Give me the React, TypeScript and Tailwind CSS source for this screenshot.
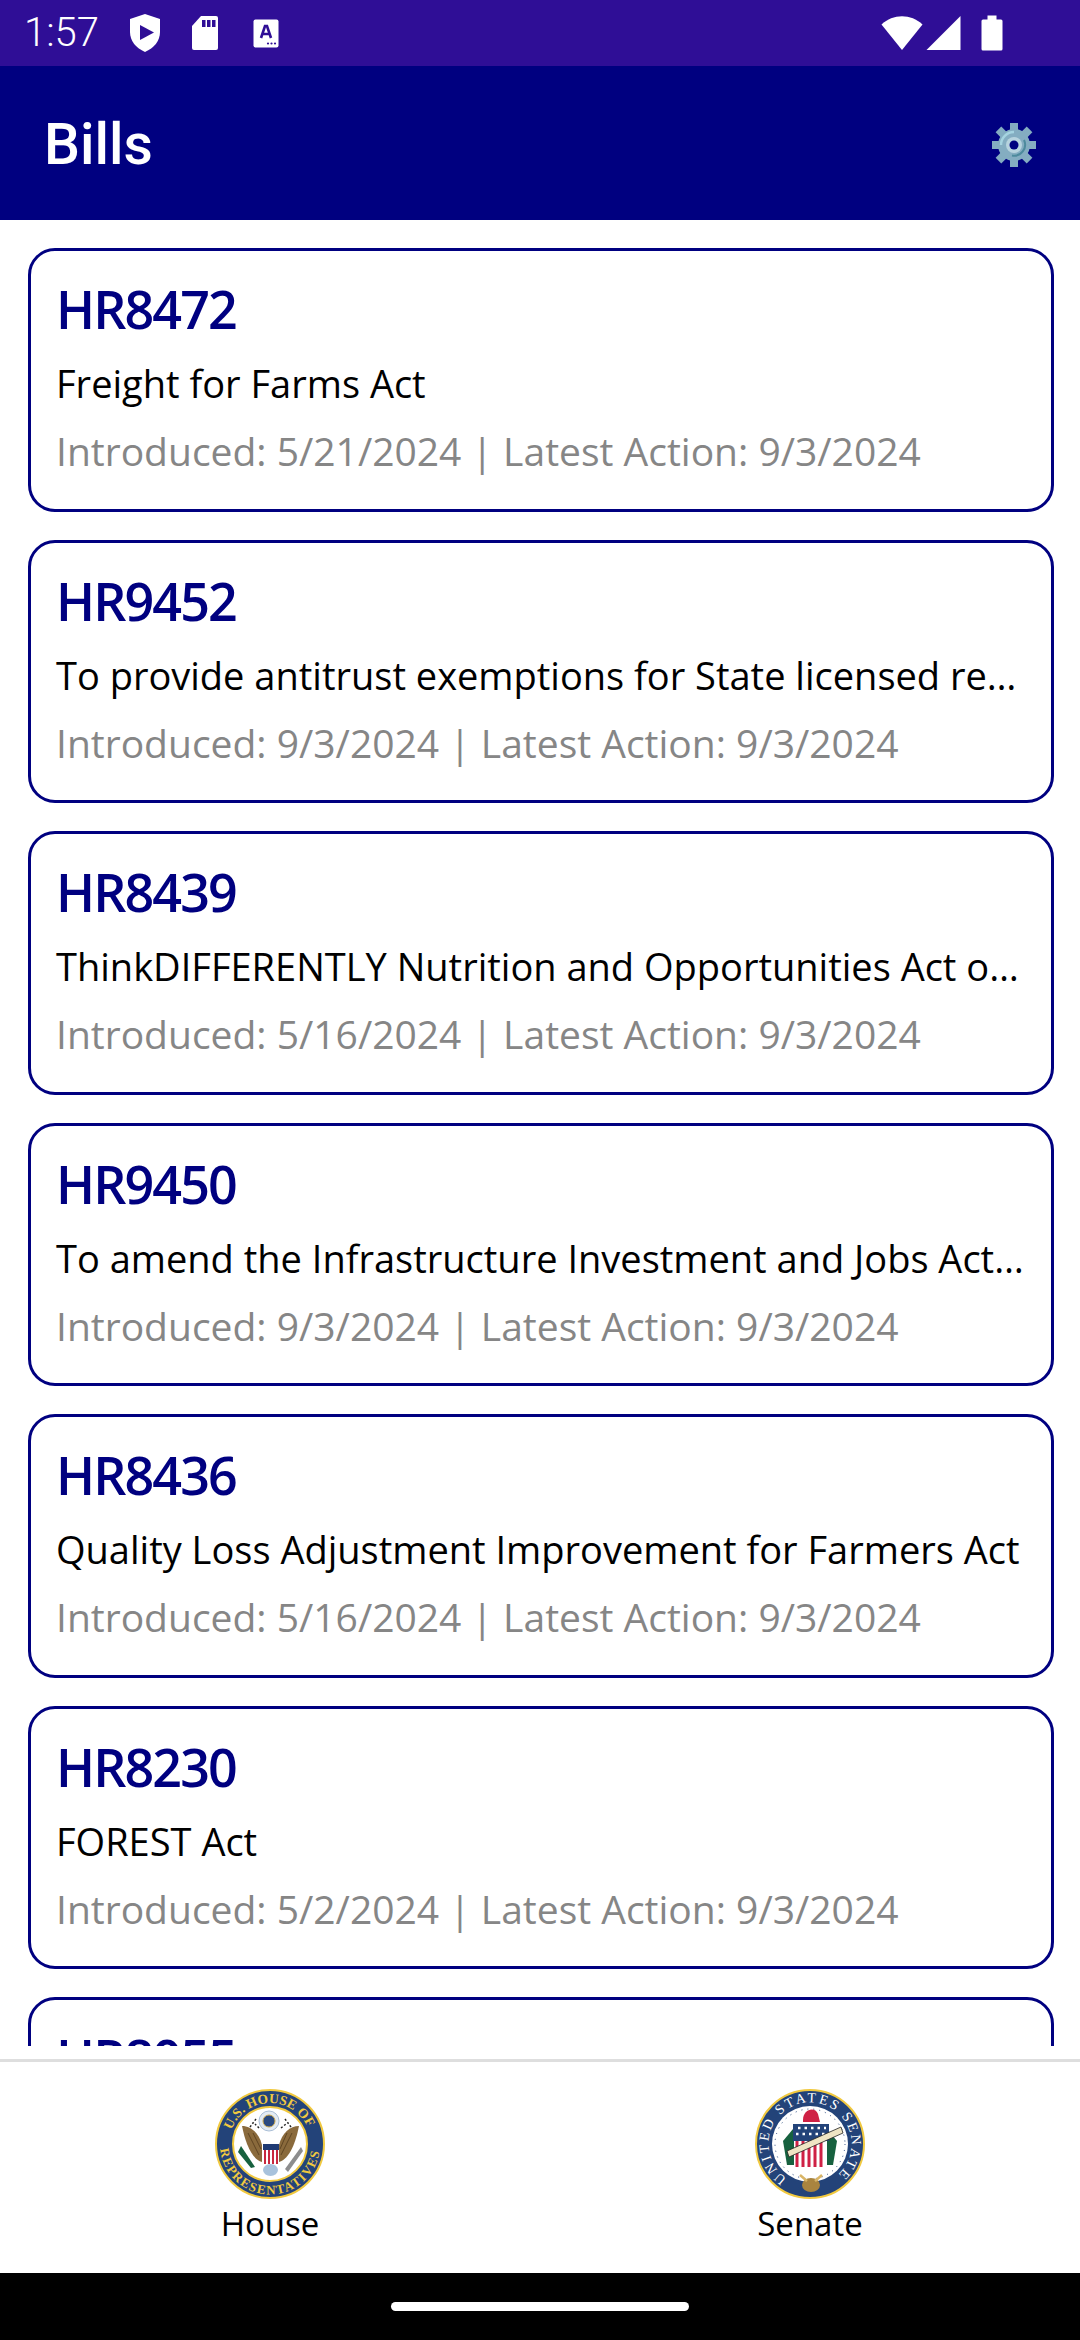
const bills = [
  { id: "HR8472", title: "Freight for Farms Act", intro: "5/21/2024" },
  { id: "HR9452", title: "To provide antitrust exemptions for State licensed re…", intro: "9/3/2024" },
  { id: "HR8439", title: "ThinkDIFFERENTLY Nutrition and Opportunities Act o…", intro: "5/16/2024" },
  { id: "HR9450", title: "To amend the Infrastructure Investment and Jobs Act…", intro: "9/3/2024" },
  { id: "HR8436", title: "Quality Loss Adjustment Improvement for Farmers Act", intro: "5/16/2024" },
  { id: "HR8230", title: "FOREST Act", intro: "5/2/2024" },
  { id: "HR8055", title: "", intro: "" },
]

const StatusIcons = () => (
  <div className="flex items-center">
    <svg width="32" height="38" viewBox="0 0 32 38" className="ml-[30px]">
      <path d="M16 0 L31 5 V18 C31 27 25 34 16 38 C7 34 1 27 1 18 V5 Z" fill="#fff" />
      <path d="M11 11 L25 18.5 L11 26 Z" fill="#2f0e96" />
    </svg>
    <svg width="28" height="34" viewBox="0 0 28 34" className="ml-[30px]">
      <path d="M10 0 H25 a2 2 0 0 1 2 2 V32 a2 2 0 0 1 -2 2 H3 a2 2 0 0 1 -2 -2 V10 Z" fill="#fff" />
      <rect x="11" y="4" width="3.5" height="7" fill="#2f0e96" />
      <rect x="16" y="4" width="3.5" height="7" fill="#2f0e96" />
      <rect x="21" y="4" width="3.5" height="7" fill="#2f0e96" />
    </svg>
    <svg width="26" height="29" viewBox="0 0 26 29" className="ml-[34px]">
      <rect x="0.5" y="0.5" width="25" height="28" rx="2" fill="#fff" />
      <path d="M8 19 L12 7 H14 L18 19 M9.5 15 H16.5" stroke="#2f0e96" strokeWidth="2.6" fill="none" />
      <circle cx="15" cy="24.5" r="1.1" fill="#2f0e96" />
      <circle cx="18.5" cy="24.5" r="1.1" fill="#2f0e96" />
      <circle cx="22" cy="24.5" r="1.1" fill="#2f0e96" />
    </svg>
  </div>
)

const SystemIcons = () => (
  <div className="flex items-center">
    <svg width="42" height="36" viewBox="0 0 42 36">
      <path d="M0.5 9.5 C12 -1.5 30 -1.5 41.5 9.5 L21 35 Z" fill="#fff" />
    </svg>
    <svg width="36" height="36" viewBox="0 0 36 36" className="ml-[3px]">
      <path d="M34.5 1 V35 H0.5 Z" fill="#fff" />
    </svg>
    <svg width="22" height="36" viewBox="0 0 22 36" className="ml-[19px]">
      <path d="M6.5 0.5 H15.5 V4.5 H20 a1.5 1.5 0 0 1 1.5 1.5 V34 a1.5 1.5 0 0 1 -1.5 1.5 H2 a1.5 1.5 0 0 1 -1.5 -1.5 V6 a1.5 1.5 0 0 1 1.5 -1.5 H6.5 Z" fill="#fff" />
    </svg>
  </div>
)

const Gear = () => (
  <svg width="44" height="44" viewBox="0 0 44 44">
    <g fill="#84adc1">
      <rect x="18" y="0" width="8" height="44" />
      <rect x="0" y="18" width="44" height="8" />
      <rect x="18" y="0" width="8" height="44" transform="rotate(45 22 22)" />
      <rect x="18" y="0" width="8" height="44" transform="rotate(-45 22 22)" />
      <circle cx="22" cy="22" r="16" />
    </g>
    <path d="M9 22 A13 13 0 0 1 22 9" stroke="#a5d3e0" strokeWidth="2.5" fill="none" />
    <path d="M32 17 A11 11 0 0 1 20 32.5" stroke="#4d8a9d" strokeWidth="2" fill="none" />
    <circle cx="22" cy="22" r="8" fill="#b7d3de" />
    <circle cx="22" cy="22" r="4.5" fill="#000080" />
  </svg>
)

const HouseSeal = () => (
  <svg width="110" height="110" viewBox="0 0 110 110">
    <defs>
      <path id="houseTop" d="M16.5 41 A41 41 0 0 1 93.5 41" />
      <path id="houseBottom" d="M5.2 60 A50 50 0 0 0 104.8 60" />
    </defs>
    <circle cx="55" cy="55" r="54" fill="#234379" stroke="#f1c93f" strokeWidth="2" />
    <circle cx="55" cy="55" r="37" fill="#fff" stroke="#f1c93f" strokeWidth="2" />
    <text fontSize="13.5" fontFamily="Liberation Serif, serif" fontWeight="700" fill="#f1c93f">
      <textPath href="#houseTop" textLength="97">U.S. HOUSE OF</textPath>
    </text>
    <text fontSize="13" fontFamily="Liberation Serif, serif" fontWeight="700" fill="#f1c93f">
      <textPath href="#houseBottom" textLength="145">REPRESENTATIVES</textPath>
    </text>
    <circle cx="54" cy="32" r="10" fill="#e4ebf3" stroke="#a9bed6" />
    <circle cx="54" cy="32" r="6" fill="#2b4a80" stroke="#c9a64a" />
    <path d="M27 37 C36 37 44 44 47 56 L47 73 C36 70 30 52 27 37 Z" fill="#8a6a3c" />
    <path d="M84 37 C75 37 67 44 64 56 L64 73 C75 70 81 52 84 37 Z" fill="#8a6a3c" />
    <path d="M33 44 L44 66 M38 44 L46 60 M77 44 L66 66 M72 44 L65 60" stroke="#5f4522" strokeWidth="1" />
    <path d="M35 38 L41 30 M44 39 L40 35 M76 38 L70 30 M66 39 L71 35" stroke="#222" strokeWidth="1.5" strokeDasharray="2 2" />
    <rect x="48" y="55" width="16" height="6" fill="#1f3a73" />
    <rect x="48" y="61" width="16" height="14" fill="#fff" />
    <path d="M50 61 V75 M54 61 V75 M58 61 V75 M62 61 V75" stroke="#c8283f" strokeWidth="2" />
    <path d="M26 57 L40 78 L36 79 L23 63 Z" fill="#17613f" />
    <path d="M86 58 L70 80 L73 83 L88 62 Z" fill="#8d8d8d" />
    <ellipse cx="55.5" cy="81" rx="7.5" ry="6" fill="#a8c2dc" />
  </svg>
)

const SenateSeal = () => (
  <svg width="110" height="110" viewBox="0 0 110 110">
    <defs>
      <path id="senateRing" d="M32 89.4 A41.5 41.5 0 1 1 78 89.4" />
    </defs>
    <circle cx="55" cy="55" r="54" fill="#234379" stroke="#f1c93f" strokeWidth="2" />
    <circle cx="55" cy="55" r="38" fill="#fff" />
    <circle cx="55" cy="55" r="35" fill="none" stroke="#234379" strokeWidth="1" strokeDasharray="1 5" />
    <text fontSize="14" fontFamily="Liberation Serif, serif" fill="#fff">
      <textPath href="#senateRing" textLength="205">UNITED STATES SENATE</textPath>
    </text>
    <path d="M28 52 L38 40 L42 76 L32 76 Z" fill="#17613f" />
    <path d="M82 52 L72 40 L68 76 L78 76 Z" fill="#17613f" />
    <path d="M48 31 C48 20 60 17 63 25 L65 33 H48 Z" fill="#cf2145" />
    <rect x="38" y="35" width="36" height="17" fill="#234379" />
    <path d="M43 39 H71 M41 45 H71" stroke="#fff" strokeWidth="2.5" strokeDasharray="2.5 4" />
    <rect x="39" y="52" width="33" height="26" fill="#fff" />
    <path d="M42 52 V78 M48 52 V78 M54 52 V78 M60 52 V78 M66 52 V78" stroke="#cf2145" strokeWidth="3" />
    <path d="M32 62 L86 38 L88 44 L34 68 Z" fill="#efe5c4" stroke="#222" strokeWidth="0.8" />
    <path d="M49 78 L55 90 L61 78 Z" fill="#fff" />
    <ellipse cx="56" cy="96" rx="9" ry="7" fill="#a9843f" />
    <path d="M45 86 L52 92 M67 86 L60 92" stroke="#d9b566" strokeWidth="2.5" />
  </svg>
)

const BillCard = ({ id, title, intro }: { id: string; title: string; intro: string }) => (
  <div className="mb-[28px] h-[263.5px] shrink-0 rounded-[27px] border-[3px] border-[#000080] pt-[23px] pr-[20px] pl-[25px]">
    <div className="text-[52px] leading-[70px] font-semibold tracking-[-1.9px] text-[#000080]">{id}</div>
    {title && <div className="mt-[13px] text-[38px] leading-[52px] whitespace-nowrap text-black">{title}</div>}
    {intro && (
      <div className="mt-[16px] text-[39px] leading-[52px] whitespace-nowrap text-[#868686]">
        Introduced: {intro} | Latest Action: 9/3/2024
      </div>
    )}
  </div>
)

export default function App() {
  return (
    <div className="flex h-[2340px] w-[1080px] flex-col overflow-hidden bg-white font-['Open_Sans',sans-serif]">
      <div className="flex h-[66px] items-center justify-between bg-[#2f0e96] pr-[77px] pl-[24px] text-white">
        <div className="flex items-center">
          <span className="font-['Roboto',sans-serif] text-[40px] font-light">1:57</span>
          <StatusIcons />
        </div>
        <SystemIcons />
      </div>
      <div className="flex h-[154px] items-center justify-between bg-[#000080] px-[44px] pt-[3px]">
        <span className="font-['Roboto',sans-serif] text-[57px] font-medium text-white">Bills</span>
        <Gear />
      </div>
      <div className="mt-[28px] flex h-[1798px] flex-col overflow-hidden pr-[26px] pl-[28px]">
        {bills.map((b) => (
          <BillCard key={b.id} {...b} />
        ))}
      </div>
      <div className="mt-[13px] flex h-[214px] border-t-[3px] border-[#dedede]">
        <div className="flex flex-1 flex-col items-center pt-[27px]">
          <HouseSeal />
          <span className="text-[33px] leading-[50px] text-black">House</span>
        </div>
        <div className="flex flex-1 flex-col items-center pt-[27px]">
          <SenateSeal />
          <span className="text-[33px] leading-[50px] text-black">Senate</span>
        </div>
      </div>
      <div className="flex h-[67px] items-center justify-center bg-black">
        <div className="h-[9px] w-[298px] rounded-full bg-white" />
      </div>
    </div>
  )
}
